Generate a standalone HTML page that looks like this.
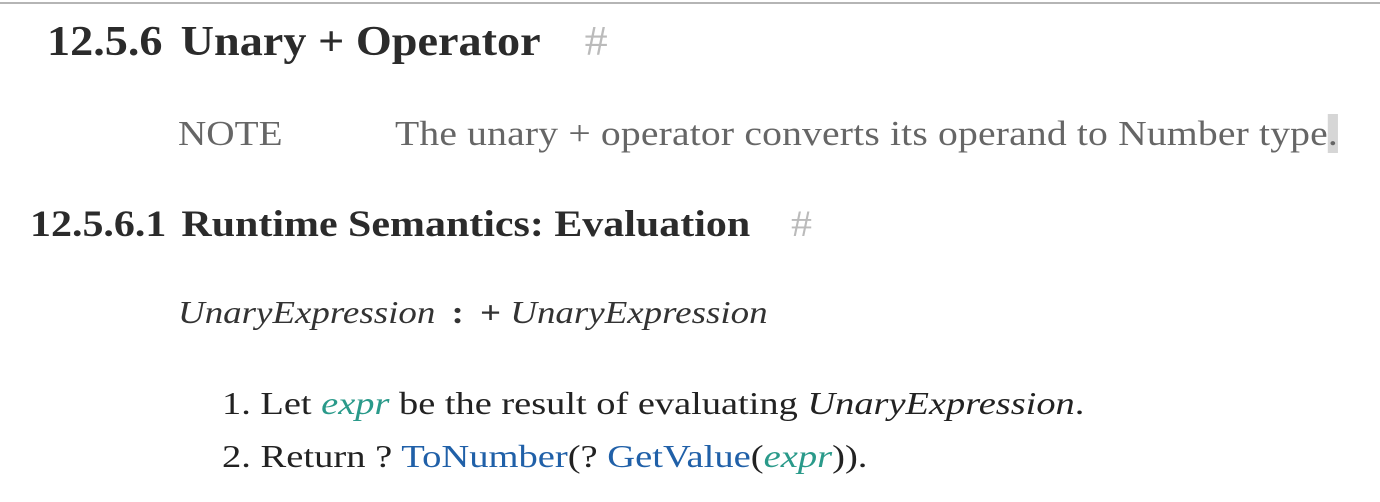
<!DOCTYPE html>
<html><head><meta charset="utf-8"><style>
body{margin:0;width:1380px;height:502px;background:#fff;position:relative;overflow:hidden;font-family:"Liberation Serif",serif;}
.l{position:absolute;white-space:nowrap;line-height:1;transform-origin:0 0;}
.h{color:#2b2b2b;font-weight:bold;}
.hash{color:#bbb;font-weight:normal;}
.note{color:#666;font-size:35px;}
i.t{color:#2a9a8a;}
a{color:#2060a8;text-decoration:none;}
</style></head><body>
<div style="position:absolute;left:0;top:2px;width:1380px;height:2px;background:#b5b5b5"></div>
<div class="l h" style="left:47px;top:21px;font-size:42px;transform:scaleX(1.1);">12.5.6 <span style="margin-left:6px">Unary + Operator</span><span class="hash" style="margin-left:40px">#</span></div>
<div class="l note" style="left:178px;top:116px;transform:scaleX(1.12);">NOTE</div>
<div class="l note" style="left:395px;top:116px;letter-spacing:0.15px;transform:scaleX(1.132);">The unary + operator converts its operand to Number type<span style="background:#d6d6d6">.</span></div>
<div class="l h" style="left:30px;top:206px;font-size:37px;transform:scaleX(1.134);">12.5.6.1 <span style="margin-left:4px">Runtime Semantics: Evaluation</span><span class="hash" style="margin-left:36px">#</span></div>
<div class="l" style="left:178px;top:296px;font-size:32px;color:#333;transform:scaleX(1.155);"><i>UnaryExpression</i> <b style="margin:0 6px">:</b> <b>+</b> <i>UnaryExpression</i></div>
<div class="l" style="left:222px;top:387px;font-size:32px;color:#222;transform:scaleX(1.2);">1. Let <i class="t">expr</i> be the result of evaluating <i>UnaryExpression</i>.</div>
<div class="l" style="left:222px;top:440px;font-size:32px;color:#222;transform:scaleX(1.205);">2. Return ? <a>ToNumber</a>(? <a>GetValue</a>(<i class="t">expr</i>)).</div>
</body></html>
